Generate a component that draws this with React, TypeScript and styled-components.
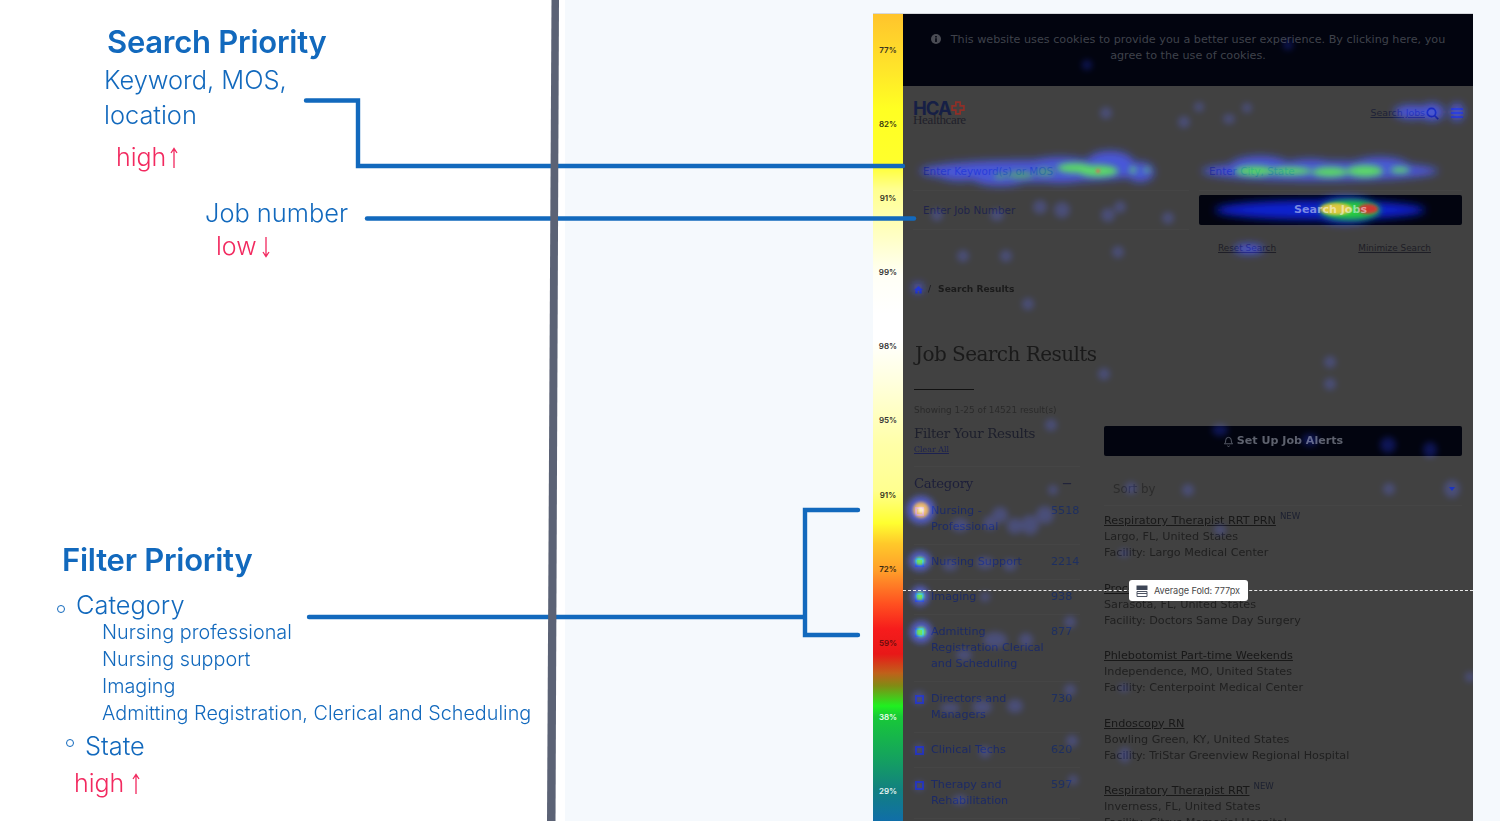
import React from "react";
import styled, { createGlobalStyle } from "styled-components";

const Global = createGlobalStyle`
  html, body { margin: 0; padding: 0; background: #fff; }
  * { box-sizing: border-box; }
`;

const BLUE = "#1269bd";
const PINK = "#f2295f";

const Stage = styled.div`
  position: relative;
  display: flex;
  width: 1500px;
  height: 821px;
  overflow: hidden;
  font-family: Inter, "Liberation Sans", sans-serif;
`;

const Notes = styled.section`
  flex: 0 0 565px;
  padding-top: 24px;
  color: ${BLUE};
  background: #fff;
  filter: blur(0.3px);
`;

const Heading = styled.h2<{ $indent: number; $top?: number }>`
  margin: ${(p) => p.$top ?? 0}px 0 0 ${(p) => p.$indent}px;
  font-size: 31px;
  line-height: 36px;
  font-weight: 600;
  letter-spacing: -0.25px;
`;

const NoteLine = styled.div<{ $indent: number; $top?: number }>`
  display: flex;
  align-items: center;
  margin: ${(p) => p.$top ?? 0}px 0 0 ${(p) => p.$indent}px;
  font-size: 25.4px;
  line-height: 35px;
  font-weight: 300;
`;

const Priority = styled(NoteLine)<{ $gap: number }>`
  gap: ${(p) => p.$gap}px;
  color: ${PINK};
  font-size: 25px;
`;

const SubList = styled.div`
  display: flex;
  flex-direction: column;
  margin: -3px 0 0 102px;
  font-size: 19.8px;
  line-height: 27px;
  font-weight: 300;
  white-space: nowrap;
`;

const Bullet = styled.i<{ $gap: number; $lift: number }>`
  flex: none;
  width: 8px;
  height: 8px;
  margin: ${(p) => p.$lift}px ${(p) => p.$gap}px 0 0;
  border: 1.7px solid ${BLUE};
  border-radius: 50%;
`;

const Viewer = styled.section`
  flex: 1;
  padding: 13px 0 0 308px;
  background: #f5f9fd;
`;

const Shot = styled.div`
  position: relative;
  display: flex;
  width: 600px;
  height: 830px;
  border-top: 1px solid #d5d8dc;
`;

const Scale = styled.div`
  flex: 0 0 30px;
  display: flex;
  flex-direction: column;
  padding-top: 31px;
  gap: 64.1px;
  background: linear-gradient(
    to bottom,
    #ffc42c 0,
    #ffe52a 55px,
    #ffff22 95px,
    #ffff2c 150px,
    #ffff90 175px,
    #ffffc8 225px,
    #fffff6 262px,
    #ffffff 300px,
    #ffffff 325px,
    #ffffe0 365px,
    #ffffa8 430px,
    #ffff90 476px,
    #ffff30 509px,
    #ffc82a 530px,
    #ffa02a 556px,
    #ff5020 590px,
    #f61c1c 615px,
    #e81818 640px,
    #c0601a 659px,
    #808c14 672px,
    #20f020 692px,
    #18c838 703px,
    #14a060 746px,
    #128080 776px,
    #106ea8 807px
  );
`;

const ScaleMark = styled.span<{ $tone: string }>`
  height: 10px;
  font-size: 8px;
  line-height: 10px;
  font-weight: 600;
  text-align: center;
  color: ${(p) => p.$tone};
`;

const Page = styled.div`
  position: relative;
  flex: 1;
  background: #414141;
  color: #1c1c1c;
  font-family: "DejaVu Sans", sans-serif;
  font-size: 11.2px;
  line-height: 16px;
  filter: blur(0.45px);
`;

const Cookie = styled.div`
  height: 72px;
  padding: 18px 20px 0;
  background: #02040f;
  color: #3f424b;
  text-align: center;
`;

const CookieIcon = styled.svg`
  width: 10px;
  height: 10px;
  margin-right: 10px;
  vertical-align: -1px;
`;

const Header = styled.header`
  display: flex;
  align-items: center;
  height: 50px;
  padding: 4px 10px 0;
`;

const Logo = styled.div`
  width: 58px;
  color: #161f45;
`;

const LogoMark = styled.div`
  display: flex;
  align-items: center;
  font-family: Inter, sans-serif;
  font-weight: 700;
  font-size: 18.5px;
  line-height: 13px;
  letter-spacing: -1px;
`;

const LogoWord = styled.div`
  font-family: "Liberation Serif", serif;
  font-size: 13px;
  line-height: 10px;
  letter-spacing: -0.35px;
  color: #20202a;
`;

const HeaderLink = styled.a`
  margin-left: auto;
  font-size: 9.4px;
  text-decoration: underline;
  color: #1e2236;
`;

const HeaderIcon = styled.svg`
  flex: none;
  margin-left: 1px;
`;

const Burger = styled.svg`
  flex: none;
  margin-left: 12px;
`;

const Form = styled.div`
  display: grid;
  grid-template-columns: 276px 263px;
  column-gap: 10px;
  padding: 16px 11px 0 10px;
`;

const Field = styled.div`
  height: 39px;
  padding: 0 10px;
  display: flex;
  align-items: center;
  color: #20244a;
  font-size: 10.4px;
  border-bottom: 1px solid #454545;
`;

const SearchButton = styled.div`
  height: 30px;
  margin-top: 4px;
  display: flex;
  align-items: center;
  justify-content: center;
  background: #02040f;
  border-radius: 2px;
  color: #767a88;
  font-weight: 700;
  font-size: 11.1px;
`;

const FormLinks = styled.div`
  grid-column: 2;
  display: flex;
  justify-content: space-between;
  padding: 10px 31px 0 19px;
  font-size: 8.9px;
  color: #1e1e26;
  text-decoration: underline;
`;

const Crumbs = styled.nav`
  display: flex;
  align-items: center;
  gap: 5px;
  margin: 25px 0 0 11px;
  font-size: 9.1px;
  font-weight: 700;
  color: #1b1b1b;
`;

const CrumbSep = styled.span`
  font-weight: 400;
  margin-right: 2px;
`;

const Title = styled.h1`
  margin: 43px 0 0 12px;
  font-family: "DejaVu Serif", serif;
  font-weight: 400;
  font-size: 20px;
  line-height: 28px;
  letter-spacing: -0.55px;
  color: #1a1a1a;
`;

const Rule = styled.div`
  width: 60px;
  height: 1px;
  margin: 21px 0 0 11px;
  background: #111;
`;

const Showing = styled.div`
  margin: 12px 0 0 11px;
  font-size: 8.9px;
  color: #2a2a2a;
`;

const Columns = styled.div`
  display: grid;
  grid-template-columns: 166px 358px;
  column-gap: 24px;
  margin: 8px 0 0 11px;
`;

const SideHeading = styled.div`
  margin-bottom: 1px;
  font-family: "DejaVu Serif", serif;
  font-size: 13.4px;
  line-height: 16px;
  letter-spacing: -0.3px;
  color: #1d1f2c;
`;

const ClearAll = styled.div`
  font-family: "DejaVu Serif", serif;
  font-size: 7.9px;
  line-height: 14px;
  text-decoration: underline;
  color: #1c2150;
`;

const CategoryHead = styled.div`
  display: flex;
  justify-content: space-between;
  align-items: center;
  margin-top: 9px;
  padding: 9px 8px 2px 0;
  border-top: 1px solid #454545;
  font-family: "DejaVu Serif", serif;
  font-size: 13.2px;
  letter-spacing: -0.3px;
  color: #1d1f3a;
`;

const CategoryRow = styled.div`
  display: grid;
  grid-template-columns: 9px 112px 29px;
  column-gap: 8px;
  padding: 9px 0;
  border-bottom: 1px solid #454545;
  color: #1c2a66;
  font-size: 11.2px;
  white-space: nowrap;
`;

const Check = styled.i`
  display: block;
  width: 9px;
  height: 9px;
  margin: 4px 0 0 1px;
  border: 2px solid #2230b0;
`;

const Count = styled.span`
  color: #1e2f60;
`;

const AlertButton = styled.div`
  height: 30px;
  display: flex;
  align-items: center;
  justify-content: center;
  gap: 3px;
  background: #02040f;
  border-radius: 2px;
  color: #5e626e;
  font-weight: 700;
  font-size: 11.1px;
`;

const Sort = styled.div`
  display: flex;
  align-items: center;
  justify-content: space-between;
  height: 50px;
  margin-bottom: 6px;
  padding: 16px 7px 0 9px;
  border-bottom: 1px solid #454545;
  font-size: 11.8px;
  color: #2c2c2c;
`;

const Caret = styled.i`
  width: 0;
  height: 0;
  border-left: 3px solid transparent;
  border-right: 3px solid transparent;
  border-top: 4px solid #1226a8;
`;

const Job = styled.article`
  height: 67.5px;
  padding-top: 1px;
  color: #202020;
  white-space: nowrap;
`;

const JobTitle = styled.a`
  text-decoration: underline;
  color: #181818;
`;

const NewTag = styled.sup`
  margin-left: 4px;
  font-size: 8.6px;
  line-height: 0;
  color: #1c2030;
`;

const Heat = styled.svg`
  position: absolute;
  left: 0;
  top: 0;
  width: 570px;
  height: 807px;
  pointer-events: none;
  mix-blend-mode: screen;
`;

const FoldLine = styled.div`
  position: absolute;
  left: 0;
  right: 0;
  top: 576px;
  border-top: 1px dashed #e8e8e8;
`;

const FoldTag = styled.div`
  position: absolute;
  left: 226px;
  top: 566px;
  display: flex;
  align-items: center;
  gap: 6px;
  width: 119px;
  height: 21px;
  padding-left: 7px;
  border-radius: 3px;
  background: #fff;
  color: #4a4a4a;
  font-family: Inter, sans-serif;
  font-size: 9.2px;
  letter-spacing: -0.1px;
`;

const Wires = styled.svg`
  position: absolute;
  left: 0;
  top: 0;
  width: 1500px;
  height: 821px;
  pointer-events: none;
`;

const Arrow = ({ up, h = 20 }: { up: boolean; h?: number }) => (
  <svg width="10" height={h + 2} viewBox={`0 0 10 ${h + 2}`} fill="none" stroke={PINK} strokeWidth="1.3">
    {up ? (
      <path d={`M5 ${h + 1}V2M2 6 5 1.500 8 6`} />
    ) : (
      <path d={`M5 1V${h}M2 ${h - 4} 5 ${h + 0.5} 8 ${h - 4}`} />
    )}
  </svg>
);

const scaleMarks: [string, string][] = [
  ["77%", "#3a3320"], ["82%", "#3a3a10"], ["91%", "#333320"], ["99%", "#333"],
  ["98%", "#333"], ["95%", "#333"], ["91%", "#333320"], ["72%", "#3a2a10"],
  ["59%", "#6a0d0d"], ["38%", "#e8ffe8"], ["29%", "#e8f4f4"],
];

const categories: [string[], string][] = [
  [["Nursing -", "Professional"], "5518"],
  [["Nursing Support"], "2214"],
  [["Imaging"], "938"],
  [["Admitting", "Registration Clerical", "and Scheduling"], "877"],
  [["Directors and", "Managers"], "730"],
  [["Clinical Techs"], "620"],
  [["Therapy and", "Rehabilitation"], "597"],
];

const jobs: { title: string; tag?: boolean; lines: string[] }[] = [
  { title: "Respiratory Therapist RRT PRN", tag: true, lines: ["Largo, FL, United States", "Facility: Largo Medical Center"] },
  { title: "Procedure Scheduler", lines: ["Sarasota, FL, United States", "Facility: Doctors Same Day Surgery"] },
  { title: "Phlebotomist Part-time Weekends", lines: ["Independence, MO, United States", "Facility: Centerpoint Medical Center"] },
  { title: "Endoscopy RN", lines: ["Bowling Green, KY, United States", "Facility: TriStar Greenview Regional Hospital"] },
  { title: "Respiratory Therapist RRT", tag: true, lines: ["Inverness, FL, United States", "Facility: Citrus Memorial Hospital"] },
];

type Blob = [number, number, number, number];

const blueBlobs: Blob[] = [
  [1035, 171, 115, 11], [960, 172, 25, 9], [1000, 176, 30, 10], [1060, 170, 40, 13], [1110, 165, 25, 14], [1140, 172, 14, 10],
  [1320, 171, 118, 10], [1260, 166, 30, 10], [1310, 170, 30, 11], [1380, 167, 30, 10],
  [1320, 210, 105, 10], [1345, 210, 34, 14],
  [1249, 249, 15, 5], [1412, 112, 18, 7], [1432, 112, 12, 9], [1457, 112, 7, 9],
  [918, 288, 5, 5],
];

const faintBlobs: Blob[] = [
  [1040, 207, 7, 7], [1062, 210, 8, 8], [1108, 215, 7, 7], [1120, 207, 6, 6], [1168, 218, 6, 6], [997, 215, 7, 6], [937, 215, 6, 6],
  [963, 256, 6, 6], [1006, 256, 6, 6], [1118, 252, 6, 6], [1106, 113, 6, 6], [1184, 122, 6, 6], [1199, 107, 5, 5], [1247, 108, 5, 5], [1229, 119, 6, 5],
  [1087, 65, 5, 5], [1288, 45, 5, 5],
  [1028, 304, 6, 6], [1104, 374, 6, 6], [1051, 425, 6, 6], [1330, 362, 6, 6], [1330, 384, 6, 6], [1430, 450, 7, 8], [1388, 445, 8, 8], [1310, 440, 8, 6], [1220, 430, 8, 6],
  [1188, 490, 6, 6], [1131, 488, 6, 6], [1452, 489, 8, 9], [1389, 489, 6, 6],
  [1000, 515, 8, 8], [1015, 526, 8, 8], [1030, 525, 9, 10], [1045, 515, 9, 9], [990, 523, 7, 7], [960, 525, 9, 7], [1053, 490, 5, 5],
  [950, 565, 8, 6], [985, 563, 9, 6], [1010, 565, 7, 6], [985, 597, 5, 5],
  [995, 640, 12, 8], [1026, 640, 7, 7], [964, 655, 8, 6], [1070, 622, 6, 6],
  [919, 698, 7, 7], [950, 708, 10, 5], [982, 707, 10, 7], [1015, 706, 8, 7], [1070, 690, 6, 6],
  [919, 749, 5, 5], [985, 752, 6, 6], [1072, 741, 6, 6], [1125, 755, 5, 8], [919, 786, 5, 5], [960, 800, 8, 5], [1073, 780, 5, 5],
  [1124, 553, 5, 4], [1124, 688, 5, 4], [1124, 755, 6, 5], [1220, 530, 6, 5], [1470, 677, 5, 5],
];

const strongBlue: Blob[] = [
  [921, 510, 14, 14], [920, 561, 11, 10], [920, 596, 9, 10], [921, 632, 11, 11],
];

const dimGreen: Blob[] = [[1020, 175, 14, 4], [1045, 172, 10, 4], [1000, 176, 6, 3]];

const greenBlobs: Blob[] = [
  [1075, 168, 18, 5], [1098, 171, 20, 6], [1133, 170, 3, 3], [1147, 170, 3, 2],
  [1255, 171, 20, 5], [1290, 171, 22, 4], [1330, 172, 18, 5], [1365, 171, 18, 6], [1400, 170, 10, 3],
  [1350, 210, 30, 10],
];

const filterGreens: Blob[] = [[920, 561, 5, 4], [920, 596, 4, 4], [921, 632, 5, 5]];

const coreBlobs: Blob[] = [[1336, 209, 16, 6]];
const hotBlobs: Blob[] = [[1368, 209, 10, 5], [1098, 171, 2, 2]];

const Ellipses = ({ items, fill, opacity, blur }: { items: Blob[]; fill: string; opacity: number; blur: string }) => (
  <g fill={fill} opacity={opacity} filter={`url(#${blur})`}>
    {items.map(([x, y, rx, ry], i) => (
      <ellipse key={i} cx={x} cy={y} rx={rx} ry={ry} />
    ))}
  </g>
);

export default function App() {
  return (
    <>
      <Global />
      <Stage>
        <Notes>
          <Heading $indent={107}>Search Priority</Heading>
          <NoteLine $indent={104} $top={2}>Keyword, MOS,</NoteLine>
          <NoteLine $indent={104}>location</NoteLine>
          <Priority $gap={3} $indent={116} $top={8}>high<Arrow up /></Priority>
          <NoteLine $indent={205} $top={20}>Job number</NoteLine>
          <Priority $gap={4} $indent={216} $top={-1}>low<Arrow up={false} /></Priority>
          <Heading $indent={62} $top={278}>Filter Priority</Heading>
          <NoteLine $indent={57} $top={9}><Bullet $gap={11} $lift={9} />Category</NoteLine>
          <SubList>
            <span>Nursing professional</span>
            <span>Nursing support</span>
            <span>Imaging</span>
            <span>Admitting Registration, Clerical and Scheduling</span>
          </SubList>
          <NoteLine $indent={66} $top={1}><Bullet $gap={11} $lift={-5} />State</NoteLine>
          <Priority $gap={7} $indent={74} $top={3}>high<Arrow up /></Priority>
        </Notes>
        <Viewer>
          <Shot>
            <Scale>
              {scaleMarks.map(([t, c], i) => (
                <ScaleMark key={i} $tone={c}>{t}</ScaleMark>
              ))}
            </Scale>
            <Page>
              <Cookie>
                <CookieIcon viewBox="0 0 10 10">
                  <circle cx="5" cy="5" r="5" fill="#4a4c54" />
                  <path d="M4.200 2h1.600v1.400H4.200zM4.200 4.300h1.600V8H4.200z" fill="#02040f" />
                </CookieIcon>
                This website uses cookies to provide you a better user experience. By clicking here, you
                <br />
                agree to the use of cookies.
              </Cookie>
              <Header>
                <Logo>
                  <LogoMark>
                    HCA
                    <svg width="14" height="14" viewBox="0 0 13 13" fill="none" stroke="#8e2f28" strokeWidth="1.600">
                      <path d="M4.500 1h4v3.500H12v4H8.500V12h-4V8.500H1v-4h3.500z" />
                    </svg>
                  </LogoMark>
                  <LogoWord>Healthcare</LogoWord>
                </Logo>
                <HeaderLink>Search Jobs</HeaderLink>
                <HeaderIcon width="13" height="13" viewBox="0 0 13 13" fill="none" stroke="#10143a" strokeWidth="1.700">
                  <circle cx="5.500" cy="5.500" r="4.200" />
                  <path d="M8.500 8.500 12.200 12.200" />
                </HeaderIcon>
                <Burger width="12" height="12" viewBox="0 0 12 12" stroke="#1a28c8" strokeWidth="1.600">
                  <path d="M0 2h12M0 6h12M0 10h12" />
                </Burger>
              </Header>
              <Form>
                <Field>Enter Keyword(s) or MOS</Field>
                <Field>Enter City, State</Field>
                <Field>Enter Job Number</Field>
                <SearchButton>Search Jobs</SearchButton>
                <FormLinks>
                  <span>Reset Search</span>
                  <span>Minimize Search</span>
                </FormLinks>
              </Form>
              <Crumbs>
                <svg width="9" height="9" viewBox="0 0 10 10" fill="#1c2cb8">
                  <path d="M5 1 0 5.500h1.500V9.500h2.500V6.500h2v3h2.500V5.500H10z" />
                </svg>
                <CrumbSep>/</CrumbSep>
                Search Results
              </Crumbs>
              <Title>Job Search Results</Title>
              <Rule />
              <Showing>Showing 1-25 of 14521 result(s)</Showing>
              <Columns>
                <div>
                  <SideHeading>Filter Your Results</SideHeading>
                  <ClearAll>Clear All</ClearAll>
                  <CategoryHead>Category<span>−</span></CategoryHead>
                  {categories.map(([lines, n]) => (
                    <CategoryRow key={n}>
                      <Check />
                      <span>
                        {lines.map((l) => (
                          <React.Fragment key={l}>{l}<br /></React.Fragment>
                        ))}
                      </span>
                      <Count>{n}</Count>
                    </CategoryRow>
                  ))}
                </div>
                <div>
                  <AlertButton>
                    <svg width="11" height="11" viewBox="0 0 24 24" fill="none" stroke="#5e626e" strokeWidth="2">
                      <path d="M6 9a6 6 0 0 1 12 0c0 7 3 8 3 8H3s3-1 3-8M10 21a2 2 0 0 0 4 0" />
                    </svg>
                    Set Up Job Alerts
                  </AlertButton>
                  <Sort>Sort by<Caret /></Sort>
                  {jobs.map((j) => (
                    <Job key={j.title}>
                      <JobTitle>{j.title}</JobTitle>
                      {j.tag && <NewTag>NEW</NewTag>}
                      {j.lines.map((l) => (
                        <div key={l}>{l}</div>
                      ))}
                    </Job>
                  ))}
                </div>
              </Columns>
              <Heat viewBox="903 14 570 807">
                <defs>
                  <filter id="b6" x="-50%" y="-100%" width="200%" height="300%"><feGaussianBlur stdDeviation="4" /></filter>
                  <filter id="b3" x="-50%" y="-100%" width="200%" height="300%"><feGaussianBlur stdDeviation="3" /></filter>
                  <filter id="b1" x="-50%" y="-100%" width="200%" height="300%"><feGaussianBlur stdDeviation="1.500" /></filter>
                </defs>
                <Ellipses items={faintBlobs} fill="#2230d0" opacity={0.36} blur="b3" />
                <Ellipses items={blueBlobs} fill="#1020e8" opacity={0.88} blur="b6" />
                <Ellipses items={strongBlue} fill="#1a2ee0" opacity={0.8} blur="b3" />
                <Ellipses items={dimGreen} fill="#1ea020" opacity={0.7} blur="b3" />
                <Ellipses items={greenBlobs} fill="#28e020" opacity={0.9} blur="b3" />
                <Ellipses items={filterGreens} fill="#38e028" opacity={1} blur="b1" />
                <Ellipses items={[[921, 510, 8, 8]]} fill="#e8a030" opacity={0.95} blur="b1" />
                <Ellipses items={[[921, 510, 3, 3]]} fill="#fff8c0" opacity={1} blur="b1" />
                <Ellipses items={coreBlobs} fill="#f2c830" opacity={0.9} blur="b1" />
                <Ellipses items={hotBlobs} fill="#e02820" opacity={0.9} blur="b1" />
              </Heat>
              <FoldLine />
              <FoldTag>
                <svg width="12" height="12" viewBox="0 0 12 12">
                  <path d="M0.500 0.500h11V5H0.500z" fill="#3e4656" />
                  <path d="M1 6.500h10M1 6.500v5h10v-5M1 8.500h10" fill="none" stroke="#4e5564" strokeWidth="1" />
                </svg>
                Average Fold: 777px
              </FoldTag>
            </Page>
          </Shot>
        </Viewer>
        <Wires viewBox="0 0 1500 821" fill="none" stroke={BLUE} strokeWidth="4.400" strokeLinecap="round">
          <path d="M306 100.500H358V166H903" />
          <path d="M367 218.500H914" />
          <path d="M309 617H804" />
          <path d="M858 510H805V635H858" />
          <polygon points="551.500,0 559,0 555.500,821 547,821" fill="#5b6275" stroke="none" />
        </Wires>
      </Stage>
    </>
  );
}
